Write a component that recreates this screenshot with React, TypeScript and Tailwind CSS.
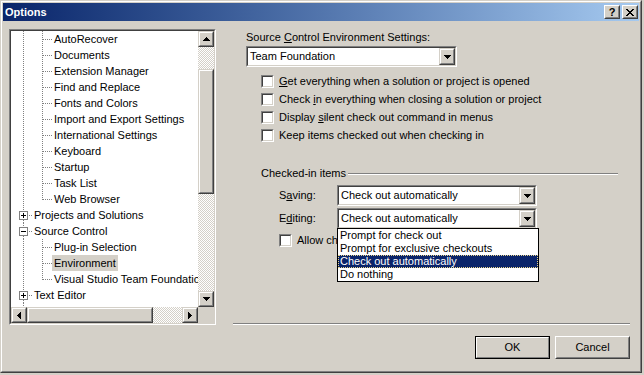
import React from "react"

type TreeRow = { label?: string; level: 1 | 2; box?: "+" | "-"; last?: boolean; selected?: boolean }

const rows: TreeRow[] = [
  { label: "AutoRecover", level: 2 },
  { label: "Documents", level: 2 },
  { label: "Extension Manager", level: 2 },
  { label: "Find and Replace", level: 2 },
  { label: "Fonts and Colors", level: 2 },
  { label: "Import and Export Settings", level: 2 },
  { label: "International Settings", level: 2 },
  { label: "Keyboard", level: 2 },
  { label: "Startup", level: 2 },
  { label: "Task List", level: 2 },
  { label: "Web Browser", level: 2, last: true },
  { label: "Projects and Solutions", level: 1, box: "+" },
  { label: "Source Control", level: 1, box: "-" },
  { label: "Plug-in Selection", level: 2 },
  { label: "Environment", level: 2, selected: true },
  { label: "Visual Studio Team Foundation", level: 2, last: true },
  { label: "Text Editor", level: 1, box: "+" },
  { level: 1 },
]

const dot = { stroke: "#808080", strokeDasharray: "1 1", shapeRendering: "crispEdges" as const }

function Gutter({ row }: { row: TreeRow }) {
  if (row.level === 2)
    return (
      <svg width="41" height="16" className="shrink-0">
        <line x1="12.5" y1="0" x2="12.5" y2="16" {...dot} />
        <line x1="31.5" y1="0" x2="31.5" y2={row.last ? 9 : 16} {...dot} />
        <line x1="32" y1="8.5" x2="41" y2="8.5" {...dot} />
      </svg>
    )
  if (!row.box)
    return (
      <svg width="21" height="16" className="shrink-0">
        <line x1="12.5" y1="0" x2="12.5" y2="16" {...dot} />
      </svg>
    )
  return (
    <svg width="21" height="16" className="shrink-0" shapeRendering="crispEdges">
      <line x1="12.5" y1="0" x2="12.5" y2="4" {...dot} />
      <line x1="12.5" y1="13" x2="12.5" y2="16" {...dot} />
      <line x1="18" y1="8.5" x2="21" y2="8.5" {...dot} />
      <rect x="8.5" y="4.5" width="8" height="8" fill="#fff" stroke="#808080" />
      <line x1="10" y1="8.5" x2="15" y2="8.5" stroke="#000" />
      {row.box === "+" && <line x1="12.5" y1="6" x2="12.5" y2="11" stroke="#000" />}
    </svg>
  )
}

function Arrow({ dir }: { dir: "up" | "down" | "left" | "right" }) {
  const paths = {
    up: "M3 0h1v1h-1z M2 1h3v1h-3z M1 2h5v1h-5z M0 3h7v1h-7z",
    down: "M0 0h7v1h-7z M1 1h5v1h-5z M2 2h3v1h-3z M3 3h1v1h-1z",
    left: "M3 0h1v7h-1z M2 1h1v5h-1z M1 2h1v3h-1z M0 3h1v1h-1z",
    right: "M0 0h1v7h-1z M1 1h1v5h-1z M2 2h1v3h-1z M3 3h1v1h-1z",
  }
  const vert = dir === "up" || dir === "down"
  return (
    <svg width={vert ? 7 : 4} height={vert ? 4 : 7} shapeRendering="crispEdges">
      <path d={paths[dir]} fill="#000" />
    </svg>
  )
}

function Raised({ className, children }: { className: string; children?: React.ReactNode }) {
  return (
    <div
      className={`shrink-0 bg-[#d4d0c8] border border-t-[#d4d0c8] border-l-[#d4d0c8] border-r-[#404040] border-b-[#404040] ${className}`}
    >
      <div className="w-full h-full flex items-center justify-center border border-t-white border-l-white border-r-[#808080] border-b-[#808080]">
        {children}
      </div>
    </div>
  )
}

const track =
  "bg-[image:repeating-conic-gradient(#ffffff_0%_25%,#d4d0c8_0%_50%)] bg-[length:2px_2px]"

function Combo({ value, width, children }: { value: string; width: string; children?: React.ReactNode }) {
  return (
    <div className={`relative h-[21px] ${width} border border-t-[#808080] border-l-[#808080] border-r-white border-b-white`}>
      <div className="w-full h-full flex bg-white border border-t-[#404040] border-l-[#404040] border-r-[#d4d0c8] border-b-[#d4d0c8]">
        <div className="flex-1 pl-[2px] leading-[17px] whitespace-nowrap overflow-hidden">{value}</div>
        <Raised className="w-[16px] h-full">
          <Arrow dir="down" />
        </Raised>
      </div>
      {children}
    </div>
  )
}

function Check({ children }: { children: React.ReactNode }) {
  return (
    <div className="flex items-center h-[18px] whitespace-nowrap">
      <div className="w-[13px] h-[13px] shrink-0 border border-t-[#808080] border-l-[#808080] border-r-white border-b-white">
        <div className="w-full h-full bg-white border border-t-[#404040] border-l-[#404040] border-r-[#d4d0c8] border-b-[#d4d0c8]" />
      </div>
      <span className="ml-[5px]">{children}</span>
    </div>
  )
}

export default function App() {
  return (
    <div className="w-[644px] h-[375px] bg-[#d4d0c8] text-[11px] text-black font-['Liberation_Sans',Arial,sans-serif] overflow-hidden">
      <div className="w-[642px] h-[373px] border border-t-[#d4d0c8] border-l-[#d4d0c8] border-r-[#404040] border-b-[#404040]">
        <div className="w-full h-full p-px border border-t-white border-l-white border-r-[#808080] border-b-[#808080] flex flex-col">
          {/* title bar */}
          <div className="h-[18px] shrink-0 flex items-center bg-linear-to-r from-[#0a246a] to-[#a6caf0] pl-[2px] pr-[1px]">
            <span className="flex-1 font-bold text-white leading-[18px]">Options</span>
            <div className="flex gap-[2px]">
              <div className="w-[16px] h-[14px] bg-[#d4d0c8] border border-t-white border-l-white border-r-[#404040] border-b-[#404040]">
                <div className="w-full h-full flex items-center justify-center border border-t-[#d4d0c8] border-l-[#d4d0c8] border-r-[#808080] border-b-[#808080] font-bold text-[11px] leading-none">
                  ?
                </div>
              </div>
              <div className="w-[16px] h-[14px] bg-[#d4d0c8] border border-t-white border-l-white border-r-[#404040] border-b-[#404040]">
                <div className="w-full h-full flex items-center justify-center border border-t-[#d4d0c8] border-l-[#d4d0c8] border-r-[#808080] border-b-[#808080]">
                  <svg width="8" height="7" shapeRendering="crispEdges">
                    <path
                      d="M0 0h2v1h-2z M6 0h2v1h-2z M1 1h2v1h-2z M5 1h2v1h-2z M2 2h4v1h-4z M3 3h2v1h-2z M2 4h4v1h-4z M1 5h2v1h-2z M5 5h2v1h-2z M0 6h2v1h-2z M6 6h2v1h-2z"
                      fill="#000"
                    />
                  </svg>
                </div>
              </div>
            </div>
          </div>

          <div className="flex flex-1">
            {/* tree */}
            <div className="mt-[8px] ml-[6px] w-[207px] h-[296px] shrink-0 border border-t-[#808080] border-l-[#808080] border-r-white border-b-white">
              <div className="w-full h-full flex flex-col bg-white border border-t-[#404040] border-l-[#404040] border-r-[#d4d0c8] border-b-[#d4d0c8]">
                <div className="flex h-[276px]">
                  <div className="w-[187px] overflow-hidden">
                    {rows.map((r, i) => (
                      <div key={i} className="flex h-[16px]">
                        <Gutter row={r} />
                        {r.label && (
                          <span
                            className={`px-[2px] h-[16px] leading-[16px] whitespace-nowrap ${r.selected ? "bg-[#d4d0c8]" : ""}`}
                          >
                            {r.label}
                          </span>
                        )}
                      </div>
                    ))}
                  </div>
                  <div className="w-[16px] flex flex-col">
                    <Raised className="w-[16px] h-[16px]">
                      <Arrow dir="up" />
                    </Raised>
                    <div className={`h-[22px] ${track}`} />
                    <Raised className="w-[16px] h-[125px]" />
                    <div className={`flex-1 ${track}`} />
                    <Raised className="w-[16px] h-[16px]">
                      <Arrow dir="down" />
                    </Raised>
                  </div>
                </div>
                <div className="flex h-[16px]">
                  <div className="w-[187px] flex">
                    <Raised className="w-[16px] h-[16px]">
                      <Arrow dir="left" />
                    </Raised>
                    <Raised className="w-[126px] h-[16px]" />
                    <div className={`flex-1 ${track}`} />
                    <Raised className="w-[16px] h-[16px]">
                      <Arrow dir="right" />
                    </Raised>
                  </div>
                  <div className="w-[16px] bg-[#d4d0c8]" />
                </div>
              </div>
            </div>

            {/* settings */}
            <div className="ml-[17px] w-[397px] flex flex-col leading-[13px]">
              <div className="mt-[10px] pl-[13px] h-[13px]">
                Source <u>C</u>ontrol Environment Settings:
              </div>
              <div className="mt-[2px] pl-[13px]">
                <Combo value="Team Foundation" width="w-[211px]" />
              </div>
              <div className="mt-[5px] pl-[28px] flex flex-col">
                <Check>
                  <u>G</u>et everything when a solution or project is opened
                </Check>
                <Check>
                  Check <u>i</u>n everything when closing a solution or project
                </Check>
                <Check>
                  Display <u>s</u>ilent check out command in menus
                </Check>
                <Check>Keep items checked out when checking in</Check>
              </div>

              <div className="mt-[23px] pl-[28px] pr-[12px] flex items-center h-[13px]">
                <span className="whitespace-nowrap">Checked-in items</span>
                <div className="ml-[2px] flex-1 h-[2px] border-t border-t-[#808080] border-b border-b-white" />
              </div>

              <div className="mt-[5px] pl-[46px] flex items-center">
                <span className="w-[58px]">
                  S<u>a</u>ving:
                </span>
                <Combo value="Check out automatically" width="w-[200px]" />
              </div>
              <div className="mt-[2px] pl-[46px] flex items-center">
                <span className="w-[58px]">
                  E<u>d</u>iting:
                </span>
                <div className="relative z-10">
                  <Combo value="Check out automatically" width="w-[200px]">
                    <div className="absolute left-[-1px] top-full w-[202px] bg-white border border-black">
                      <div className="h-[13px] pl-[2px] whitespace-nowrap">Prompt for check out</div>
                      <div className="h-[13px] pl-[2px] whitespace-nowrap">Prompt for exclusive checkouts</div>
                      <div className="h-[13px] pl-[1px] whitespace-nowrap bg-[#0a246a] text-white border border-dotted border-[#e8d48a] leading-[11px]">
                        Check out automatically
                      </div>
                      <div className="h-[13px] pl-[2px] whitespace-nowrap">Do nothing</div>
                    </div>
                  </Combo>
                </div>
              </div>
              <div className="mt-[2px] pl-[46px]">
                <Check>Allow checked-in items to be edited</Check>
              </div>

              <div className="mt-[74px] h-[2px] border-t border-t-[#808080] border-b border-b-white" />

              <div className="mt-[11px] flex justify-end gap-[5px]">
                <div className="w-[75px] h-[23px] border border-black">
                  <div className="w-full h-full flex items-center justify-center border border-t-white border-l-white border-r-[#808080] border-b-[#808080]">
                    OK
                  </div>
                </div>
                <div className="w-[75px] h-[23px] border border-t-white border-l-white border-r-[#404040] border-b-[#404040]">
                  <div className="w-full h-full flex items-center justify-center border border-t-[#d4d0c8] border-l-[#d4d0c8] border-r-[#808080] border-b-[#808080]">
                    Cancel
                  </div>
                </div>
              </div>
            </div>
          </div>
        </div>
      </div>
    </div>
  )
}
